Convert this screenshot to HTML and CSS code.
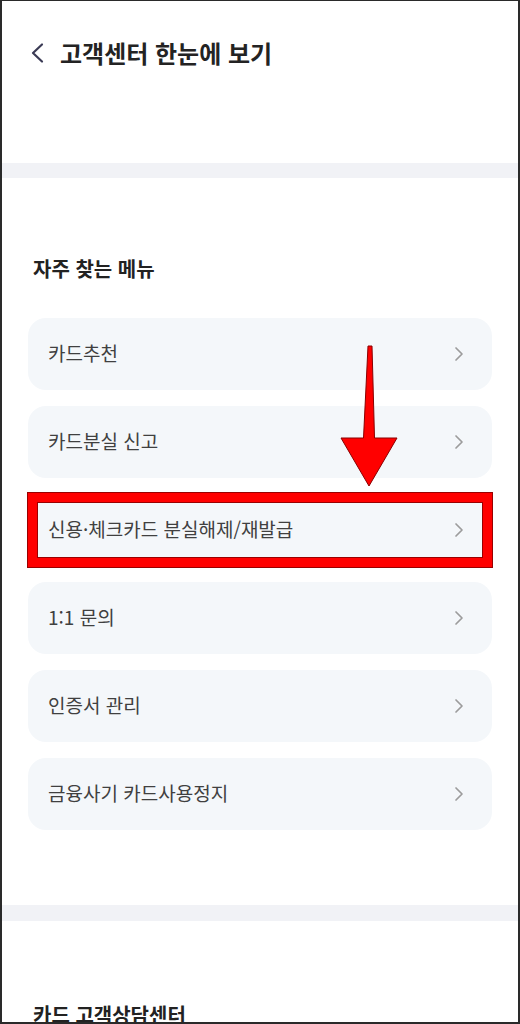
FILE: index.html
```html
<!DOCTYPE html>
<html lang="ko">
<head>
<meta charset="utf-8">
<title>고객센터 한눈에 보기</title>
<link rel="stylesheet" href="styles.css">
</head>
<body>
<div class="frame">
  <header class="topbar">
    <svg class="back" width="18" height="22" viewBox="0 0 18 22"><path d="M14 2.5 L5 11 L14 19.5" fill="none" stroke="#3b3b55" stroke-width="2.2" stroke-linecap="round" stroke-linejoin="round"/></svg>
    <h1 class="title">고객센터 한눈에 보기</h1>
  </header>
  <div class="band"></div>
  <section class="menu">
    <h2 class="heading">자주 찾는 메뉴</h2>
    <ul class="list">
      <li class="item"><span>카드추천</span><svg class="chev" width="10" height="16" viewBox="0 0 10 16"><path d="M2 2 L8 8 L2 14" fill="none" stroke="#9c9c9c" stroke-width="1.7" stroke-linecap="round" stroke-linejoin="round"/></svg></li>
      <li class="item"><span>카드분실 신고</span><svg class="chev" width="10" height="16" viewBox="0 0 10 16"><path d="M2 2 L8 8 L2 14" fill="none" stroke="#9c9c9c" stroke-width="1.7" stroke-linecap="round" stroke-linejoin="round"/></svg></li>
      <li class="item"><span>신용·체크카드 분실해제/재발급</span><svg class="chev" width="10" height="16" viewBox="0 0 10 16"><path d="M2 2 L8 8 L2 14" fill="none" stroke="#9c9c9c" stroke-width="1.7" stroke-linecap="round" stroke-linejoin="round"/></svg></li>
      <li class="item"><span>1:1 문의</span><svg class="chev" width="10" height="16" viewBox="0 0 10 16"><path d="M2 2 L8 8 L2 14" fill="none" stroke="#9c9c9c" stroke-width="1.7" stroke-linecap="round" stroke-linejoin="round"/></svg></li>
      <li class="item"><span>인증서 관리</span><svg class="chev" width="10" height="16" viewBox="0 0 10 16"><path d="M2 2 L8 8 L2 14" fill="none" stroke="#9c9c9c" stroke-width="1.7" stroke-linecap="round" stroke-linejoin="round"/></svg></li>
      <li class="item"><span>금융사기 카드사용정지</span><svg class="chev" width="10" height="16" viewBox="0 0 10 16"><path d="M2 2 L8 8 L2 14" fill="none" stroke="#9c9c9c" stroke-width="1.7" stroke-linecap="round" stroke-linejoin="round"/></svg></li>
    </ul>
  </section>
  <div class="band band2"></div>
  <section class="center">
    <h2 class="heading">카드 고객상담센터</h2>
  </section>
  <svg class="overlay" width="520" height="1024" viewBox="0 0 520 1024">
    <rect x="32" y="497" width="456" height="66" fill="none" stroke="#ff0000" stroke-width="10"/>
    <rect x="27.5" y="492.5" width="465" height="75" fill="none" stroke="#9a0000" stroke-width="1"/>
    <rect x="37.5" y="502.5" width="445" height="55" fill="none" stroke="#9a0000" stroke-width="1"/>
    <polygon points="368,346 372,346 374.5,438 397,438 369,486 341,438 363.5,438" fill="#ff0000" stroke="#8a0000" stroke-width="1" stroke-linejoin="miter"/>
  </svg>
</div>
</body>
</html>
```
FILE: styles.css
```css
* { box-sizing: border-box; }
html, body { margin: 0; padding: 0; background: #fff; }
body { font-family: "Noto Sans CJK KR", "Noto Sans", sans-serif; }
.frame {
  position: relative;
  width: 520px;
  height: 1024px;
  overflow: hidden;
  border: 2px solid #2a2a2a;
  border-top-width: 1px;
  border-bottom-width: 2px;
  background: #fff;
}
.topbar {
  height: 162px;
  display: flex;
  align-items: flex-start;
  padding: 35px 0 0 26px;
}
.back { margin-top: 6px; display: block; }
.title {
  margin: 0 0 0 14px;
  font-size: 24px;
  line-height: 34px;
  font-weight: 700;
  color: #232323;
}
.band { height: 15px; background: #f1f2f6; }
.band2 { height: 16px; }
.menu { padding: 77px 26px 0; height: 727px; }
.heading {
  margin: 0 0 0 5px;
  font-size: 20px;
  line-height: 28px;
  font-weight: 700;
  color: #222;
}
.list {
  list-style: none;
  margin: 35px 0 0;
  padding: 0;
  display: flex;
  flex-direction: column;
  gap: 16px;
}
.item {
  height: 72px;
  background: #f4f7fa;
  border-radius: 18px;
  display: flex;
  align-items: center;
  justify-content: space-between;
  padding: 0 28px 0 20px;
  font-size: 19px;
  line-height: 26px;
  color: #404040;
}
.item span { margin-top: -3px; }
.chev { display: block; }
.center { padding: 80px 26px 0; }
.overlay { position: absolute; top: -1px; left: -2px; pointer-events: none; }
```
